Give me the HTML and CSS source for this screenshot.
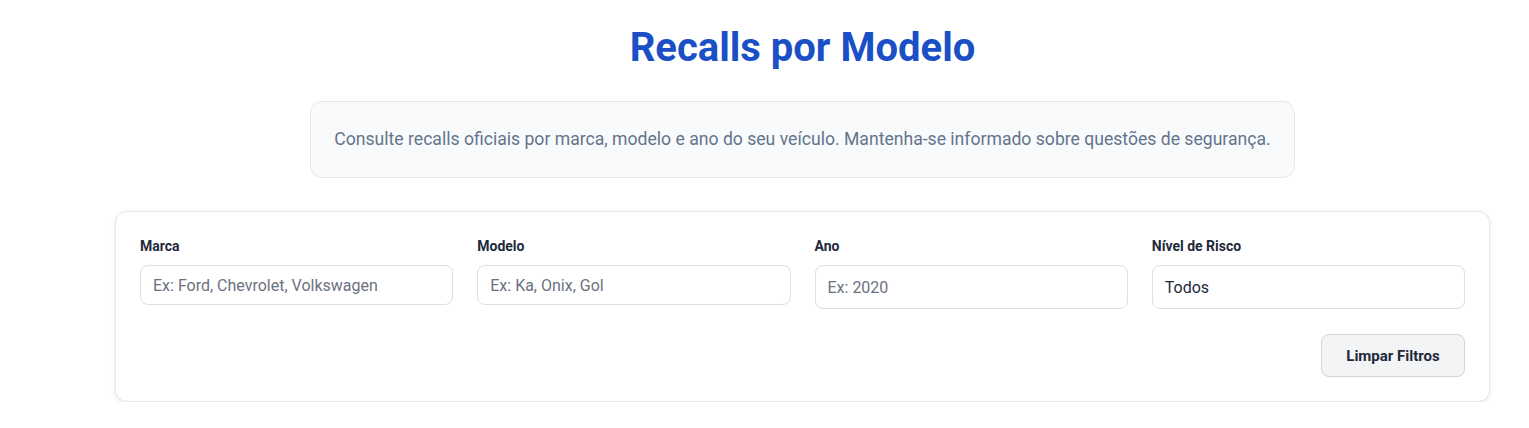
FILE: index.html
```html
<!DOCTYPE html>
<html lang="pt-BR">
<head>
<meta charset="utf-8">
<title>Recalls por Modelo</title>
<link rel="stylesheet" href="styles.css">
</head>
<body>
<main class="page">
  <h1 class="title">Recalls por Modelo</h1>
  <div class="intro">
    <p>Consulte recalls oficiais por marca, modelo e ano do seu veículo. Mantenha-se informado sobre questões de segurança.</p>
  </div>
  <section class="filters">
    <div class="grid">
      <div class="field">
        <label class="label" for="marca">Marca</label>
        <input class="input" id="marca" type="text" placeholder="Ex: Ford, Chevrolet, Volkswagen">
      </div>
      <div class="field">
        <label class="label" for="modelo">Modelo</label>
        <input class="input" id="modelo" type="text" placeholder="Ex: Ka, Onix, Gol">
      </div>
      <div class="field">
        <label class="label" for="ano">Ano</label>
        <input class="input input-tall" id="ano" type="text" placeholder="Ex: 2020">
      </div>
      <div class="field">
        <label class="label" for="risco">Nível de Risco</label>
        <div class="input input-tall select" id="risco">Todos</div>
      </div>
    </div>
    <div class="actions">
      <button class="btn" type="button">Limpar Filtros</button>
    </div>
  </section>
</main>
</body>
</html>
```

FILE: styles.css
```css
* { box-sizing: border-box; }
html, body { margin: 0; padding: 0; background: #ffffff; }
body { font-family: Roboto, "Liberation Sans", Arial, sans-serif; color: #1e293b; }

.page {
  width: 1375px;
  margin-left: 115px;
  padding-top: 24px;
  display: flex;
  flex-direction: column;
  align-items: center;
}

.title {
  margin: 0;
  font-size: 40px;
  line-height: 48px;
  font-weight: 700;
  color: #1a4fc5;
}

.intro {
  margin-top: 29px;
  width: 985px;
  background: #f8fafc;
  border: 1px solid #e5e7eb;
  border-radius: 12px;
  padding: 24px 20px;
  text-align: center;
}
.intro p {
  margin: 0;
  font-size: 17.6px;
  line-height: 27px;
  color: #64748b;
  white-space: nowrap;
}

.filters {
  margin-top: 33px;
  width: 100%;
  background: #fff;
  border: 1px solid #e5e7eb;
  border-radius: 12px;
  box-shadow: 0 1px 4px rgba(0,0,0,0.1);
  padding: 24px;
}

.grid {
  display: grid;
  grid-template-columns: repeat(4, 1fr);
  column-gap: 24px;
  align-items: start;
}

.field { display: flex; flex-direction: column; }

.label {
  font-size: 14px;
  line-height: 20px;
  font-weight: 700;
  color: #1e293b;
  margin-bottom: 9px;
}

.input {
  height: 40px;
  border: 1px solid #dcdfe4;
  border-radius: 8px;
  padding: 0 12px;
  font-family: inherit;
  font-size: 16px;
  color: #1e293b;
  background: #fff;
  outline: none;
  width: 100%;
}
.input::placeholder { color: #6b7280; }
.input-tall { height: 44px; }
.select { display: flex; align-items: center; }

.actions {
  margin-top: 25px;
  display: flex;
  justify-content: flex-end;
}

.btn {
  width: 144px;
  height: 43px;
  background: #f3f4f6;
  border: 1px solid #d1d5db;
  border-radius: 8px;
  font-family: inherit;
  font-size: 15px;
  font-weight: 700;
  color: #1e293b;
}
```
